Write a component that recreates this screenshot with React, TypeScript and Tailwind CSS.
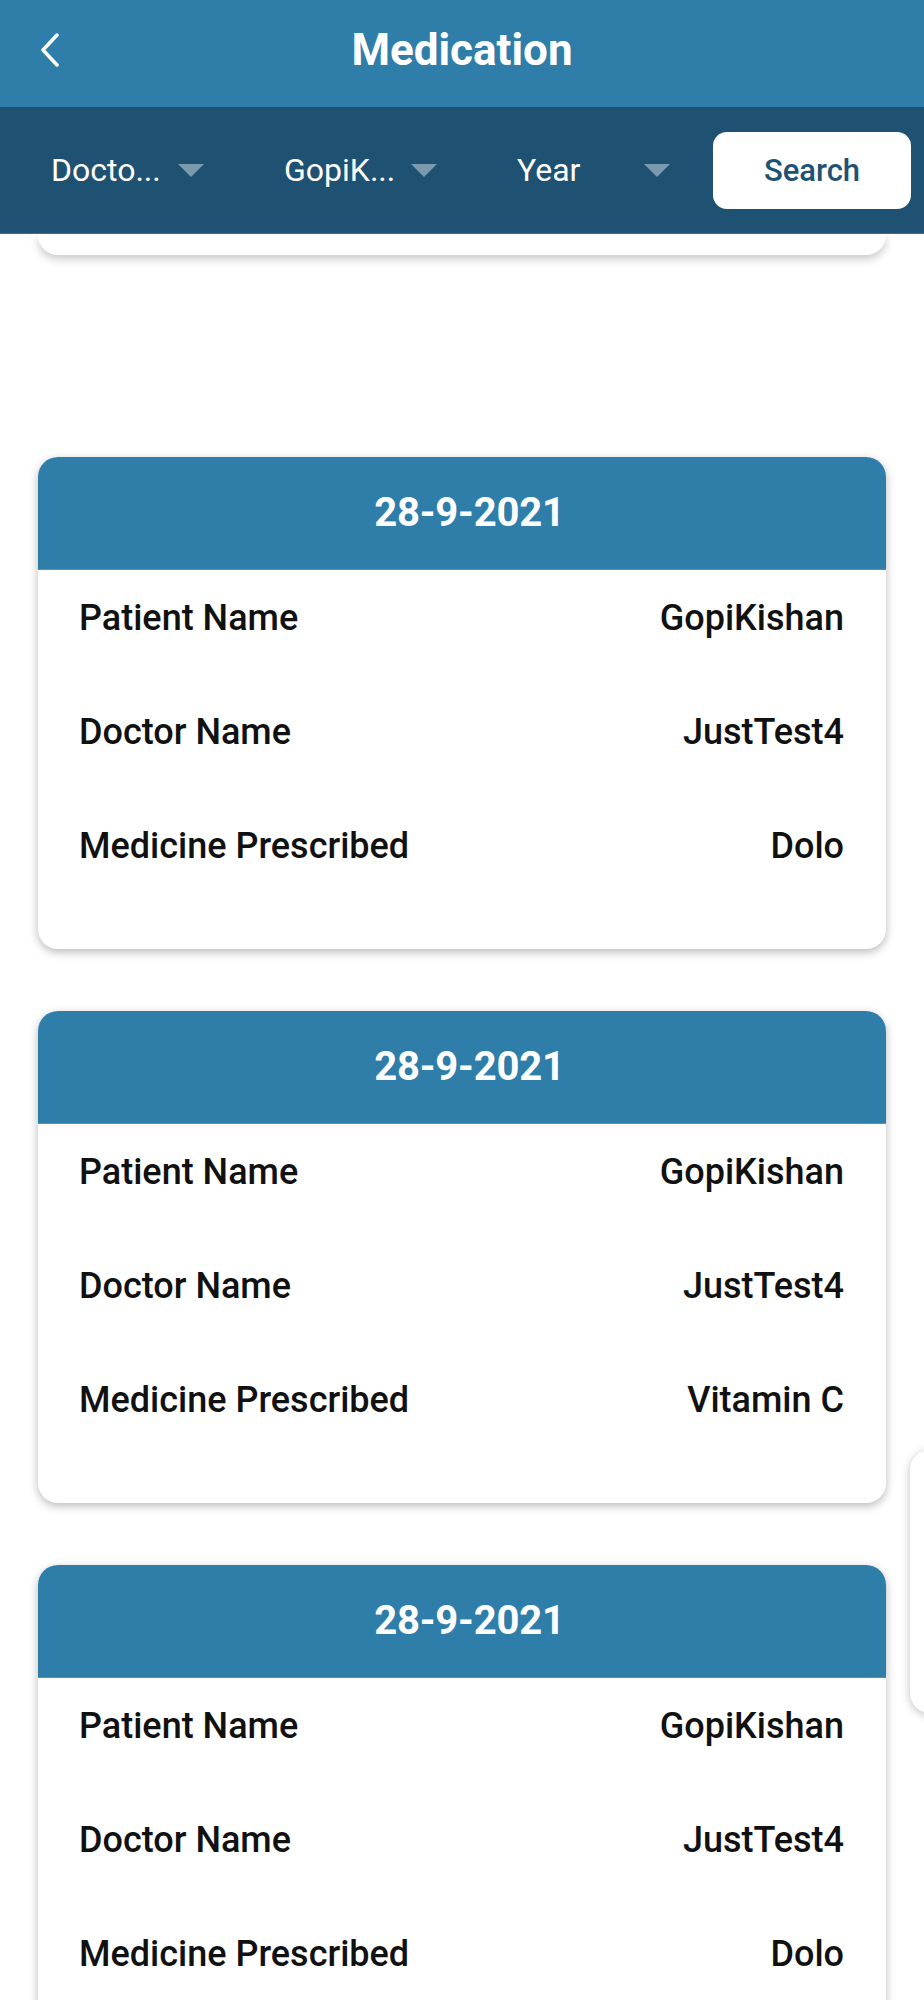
import React from "react";

const rows = [
  { patient: "GopiKishan", doctor: "JustTest4", medicine: "Dolo" },
  { patient: "GopiKishan", doctor: "JustTest4", medicine: "Vitamin C" },
  { patient: "GopiKishan", doctor: "JustTest4", medicine: "Dolo" },
];

function Triangle() {
  return (
    <svg width="26" height="13" viewBox="0 0 26 13" className="shrink-0">
      <polygon points="0,0 26,0 13,13" fill="#7b9aae" />
    </svg>
  );
}

function Dropdown({ label }: { label: string }) {
  return (
    <div className="flex items-center w-[153px]">
      <span className="w-[127px] text-[32px] text-white leading-[40px] whitespace-nowrap">{label}</span>
      <Triangle />
    </div>
  );
}

function Row({ label, value }: { label: string; value: string }) {
  return (
    <div className="flex h-[56px] items-center justify-between text-[36px] font-medium text-[#111] leading-none">
      <span>{label}</span>
      <span>{value}</span>
    </div>
  );
}

function Card({ patient, doctor, medicine }: { patient: string; doctor: string; medicine: string }) {
  return (
    <div className="mx-[38px] h-[492px] rounded-[20px] bg-white shadow-[0_3px_10px_rgba(0,0,0,0.28)] overflow-hidden flex flex-col">
      <div className="h-[113px] shrink-0 bg-[#2f7ea9] flex items-center justify-center pl-[15px] border-b border-[#4a93bb]">
        <span className="text-[40px] font-bold text-white leading-none tracking-[-0.2px]">28-9-2021</span>
      </div>
      <div className="flex flex-col gap-[58px] pt-[20px] pl-[41px] pr-[42px]">
        <Row label="Patient Name" value={patient} />
        <Row label="Doctor Name" value={doctor} />
        <Row label="Medicine Prescribed" value={medicine} />
      </div>
    </div>
  );
}

export default function App() {
  return (
    <div
      className="relative w-[924px] h-[2000px] overflow-hidden bg-white"
      style={{ fontFamily: "Roboto, 'Noto Sans', sans-serif" }}
    >
      <div className="relative z-10">
        <div className="h-[107px] bg-[#2f7ea9] flex items-center relative">
          <svg width="20" height="34" viewBox="0 0 20 34" className="absolute left-[40px] top-[33px]">
            <polyline points="17,2 3,17 17,32" fill="none" stroke="white" strokeWidth="3.5" strokeLinecap="round" strokeLinejoin="round" />
          </svg>
          <h1 className="w-full text-center text-[44px] font-bold text-white leading-none -mt-[8px]">Medication</h1>
        </div>
        <div className="h-[127px] bg-[#1f5272] flex items-center pl-[51px] border-b border-[#3d6d8c]">
          <div className="flex items-center gap-[80px]">
            <Dropdown label="Docto..." />
            <Dropdown label="GopiK..." />
            <Dropdown label="Year" />
          </div>
          <button className="ml-[43px] w-[198px] h-[77px] rounded-[14px] bg-white text-[#1f5272] text-[31px] font-medium leading-none">
            Search
          </button>
        </div>
      </div>

      <div className="mx-[38px] h-[21px] bg-white rounded-b-[20px] shadow-[0_4px_10px_rgba(0,0,0,0.22)]" />

      <div className="flex flex-col gap-[62px] pt-[202px]">
        {rows.map((r, i) => (
          <Card key={i} {...r} />
        ))}
      </div>

      <div className="absolute left-[910px] top-[1450px] w-[40px] h-[263px] rounded-l-[20px] bg-white shadow-[0_2px_10px_rgba(0,0,0,0.25)]" />
    </div>
  );
}
